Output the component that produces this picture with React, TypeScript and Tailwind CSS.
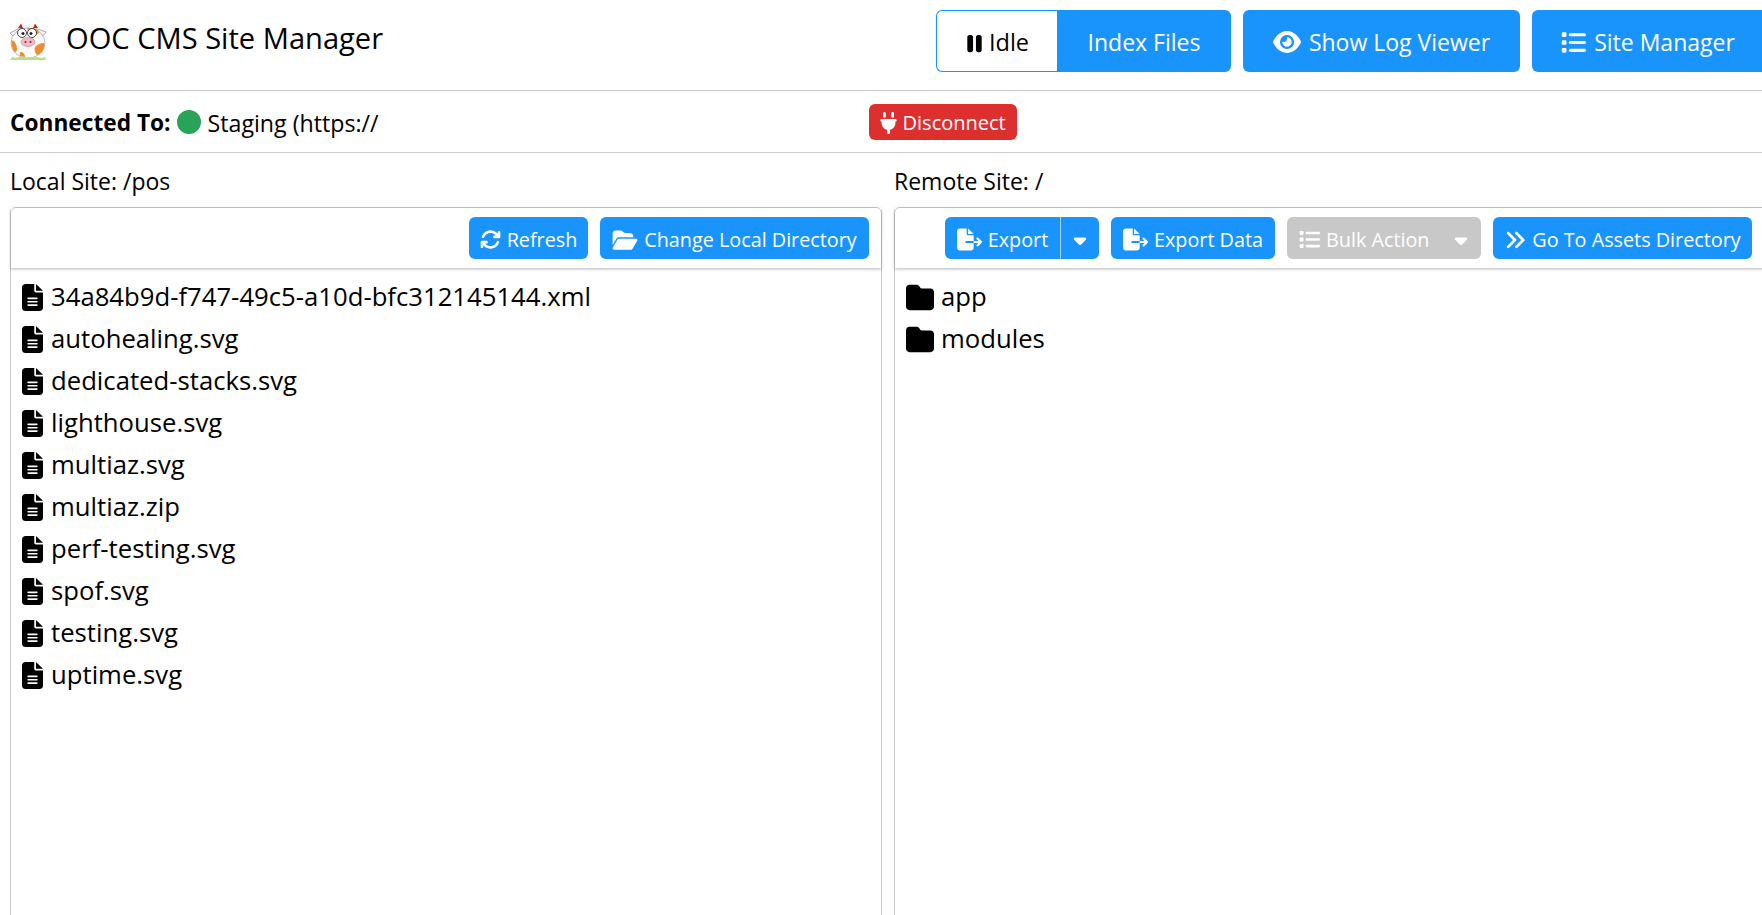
import React from 'react'
import {
  FaAnglesRight,
  FaArrowsRotate,
  FaCaretDown,
  FaEye,
  FaFileExport,
  FaFileLines,
  FaFolder,
  FaFolderOpen,
  FaList,
  FaPause,
  FaPlug,
} from 'react-icons/fa6'

const localFiles = [
  '34a84b9d-f747-49c5-a10d-bfc312145144.xml',
  'autohealing.svg',
  'dedicated-stacks.svg',
  'lighthouse.svg',
  'multiaz.svg',
  'multiaz.zip',
  'perf-testing.svg',
  'spof.svg',
  'testing.svg',
  'uptime.svg',
]

function CowLogo() {
  return (
    <svg viewBox="0 0 38 38" className="w-[38px] h-[38px] shrink-0">
      <path d="M1 11 L9 7 L29 7 L37 10 L33 15 L5 15 Z" fill="#f4f4f4" stroke="#888" strokeWidth="0.7" />
      <path d="M9 6 L12 1.5 L14 6 Z M24 6 L26 1.5 L29 6 Z" fill="#d9201a" />
      <ellipse cx="19" cy="21" rx="17" ry="15" fill="#fdfdfd" stroke="#999" strokeWidth="0.7" />
      <path d="M18 6.5 C23 5 30 7 30 11 C27 14 21 13 18 6.5 Z" fill="#f08d2e" />
      <path d="M2.5 19 C5 17 8 23 8 27 C8 30 6 31 4.5 29 C3 26 2.5 22 2.5 19 Z" fill="#f08d2e" />
      <path d="M27 24 C31 21 35 20 35.5 22 C35.5 28 32 32 28 33 C25 30 25 26 27 24 Z" fill="#f08d2e" />
      <path d="M11 30 C14 30 16 32 16 35 L11 34 Z" fill="#f08d2e" />
      <circle cx="13" cy="11" r="4.5" fill="#fff" stroke="#333" strokeWidth="0.9" />
      <circle cx="23" cy="11" r="4.5" fill="#fff" stroke="#333" strokeWidth="0.9" />
      <circle cx="14" cy="11.5" r="1.5" fill="#222" />
      <circle cx="22" cy="11.5" r="1.5" fill="#222" />
      <ellipse cx="19" cy="20" rx="7" ry="4.5" fill="#f5b7c0" stroke="#b77" strokeWidth="0.5" />
      <circle cx="16.5" cy="20" r="1" fill="#444" />
      <circle cx="21.5" cy="20" r="1" fill="#444" />
      <path d="M1 38 L3 35 L6 36 L10 35 L19 36 L28 35 L33 36 L36 35 L37 38 Z" fill="#b7e07f" />
    </svg>
  )
}

function Button({ className = '', children }: { className?: string; children: React.ReactNode }) {
  return (
    <button
      type="button"
      className={`h-[42px] pt-[3px] rounded-[6px] bg-[#1994fc] text-white text-[19.8px] flex items-center justify-center gap-[6px] whitespace-nowrap ${className}`}
    >
      {children}
    </button>
  )
}

function HeaderButton({ className = '', children }: { className?: string; children: React.ReactNode }) {
  return (
    <button
      type="button"
      className={`h-[62px] pt-[2px] rounded-[6px] bg-[#1994fc] text-white text-[23px] flex items-center justify-center gap-[8px] whitespace-nowrap ${className}`}
    >
      {children}
    </button>
  )
}

function Row({ icon, name }: { icon: React.ReactNode; name: string }) {
  return (
    <li className="h-[42px] flex items-center gap-[7px] text-[25.7px] text-black">
      {icon}
      <span>{name}</span>
    </li>
  )
}

export default function App() {
  return (
    <div className="w-[1762px] h-[915px] overflow-hidden bg-white text-black font-['Open_Sans',sans-serif]">
      <header className="h-[91px] border-b border-[#cccccc] flex justify-between pt-[10px]">
        <div className="flex items-start pl-[9px] pt-[12px] gap-[19px]">
          <CowLogo />
          <h1 className="text-[29.1px] leading-[36px] font-normal -mt-[2px]">OOC CMS Site Manager</h1>
        </div>
        <div className="flex gap-[12px] items-start">
          <div className="flex">
            <div className="w-[121px] h-[62px] pt-[4px] rounded-l-[6px] border border-[#1994fc] border-r-0 flex items-center justify-center gap-[5px] text-[23.5px]">
              <FaPause className="w-[19px] h-[23px]" />
              <span>Idle</span>
            </div>
            <HeaderButton className="w-[174px] rounded-l-none">Index Files</HeaderButton>
          </div>
          <HeaderButton className="w-[277px]">
            <FaEye className="w-[28px] h-[26px]" />
            Show Log Viewer
          </HeaderButton>
          <HeaderButton className="w-[230px] rounded-r-none pl-[2px]">
            <FaList className="w-[25px] h-[25px]" />
            Site Manager
          </HeaderButton>
        </div>
      </header>

      <div className="h-[62px] border-b border-[#cccccc] flex items-center pl-[10px]">
        <b className="font-bold text-[22.7px] pt-[4px]">Connected To:</b>
        <span className="w-[24px] h-[24px] rounded-full bg-[#28a358] ml-[6px] mr-[7px]" />
        <span className="text-[23.2px] pt-[3px]">Staging (https://</span>
        <div className="ml-[490px] h-[36px] w-[148px] pt-[3px] rounded-[6px] bg-[#de2f2f] text-white text-[20px] flex items-center justify-center gap-[6px]">
          <FaPlug className="w-[17px] h-[22px]" />
          Disconnect
        </div>
      </div>

      <div className="flex gap-[12px] pl-[10px]">
        <section className="w-[872px] shrink-0">
          <div className="h-[54px] pt-[3px] flex items-center text-[23px]">Local Site: /pos</div>
          <div className="h-[720px] border border-[#c8c8c8] rounded-[6px]">
            <div className="h-[60px] flex justify-end items-center gap-[12px] pr-[12px] shadow-[0_1px_3px_rgba(0,0,0,0.3)]">
              <Button className="w-[119px]">
                <FaArrowsRotate className="w-[21px] h-[21px]" />
                Refresh
              </Button>
              <Button className="w-[269px]">
                <FaFolderOpen className="w-[26px] h-[22px]" />
                Change Local Directory
              </Button>
            </div>
            <ul className="pt-[8px] pl-[11px]">
              {localFiles.map(name => (
                <Row
                  key={name}
                  name={name}
                  icon={<FaFileLines preserveAspectRatio="none" className="w-[21px] h-[27px] mr-[1px] shrink-0" />}
                />
              ))}
            </ul>
          </div>
        </section>

        <section className="w-[876px] shrink-0">
          <div className="h-[54px] pt-[3px] flex items-center text-[23px]">Remote Site: /</div>
          <div className="h-[720px] border border-[#c8c8c8] rounded-[6px]">
            <div className="h-[60px] flex justify-end items-center gap-[12px] pr-[17px] shadow-[0_1px_3px_rgba(0,0,0,0.3)]">
              <div className="flex">
                <Button className="w-[116px] rounded-r-none border-r border-white/60">
                  <FaFileExport className="w-[25px] h-[23px]" />
                  Export
                </Button>
                <Button className="w-[38px] rounded-l-none">
                  <FaCaretDown className="w-[16px] h-[20px]" />
                </Button>
              </div>
              <Button className="w-[164px]">
                <FaFileExport className="w-[25px] h-[23px]" />
                Export Data
              </Button>
              <Button className="w-[194px] !bg-[#c8c8c8] !justify-start pl-[12px]">
                <FaList className="w-[21px] h-[21px]" />
                Bulk Action
                <FaCaretDown className="w-[16px] h-[20px] ml-[17px]" />
              </Button>
              <Button className="w-[259px]">
                <FaAnglesRight className="w-[22px] h-[22px]" />
                Go To Assets Directory
              </Button>
            </div>
            <ul className="pt-[8px] pl-[11px]">
              {['app', 'modules'].map(name => (
                <Row
                  key={name}
                  name={name}
                  icon={<FaFolder preserveAspectRatio="none" className="w-[28px] h-[29px] shrink-0" />}
                />
              ))}
            </ul>
          </div>
        </section>
      </div>
    </div>
  )
}
